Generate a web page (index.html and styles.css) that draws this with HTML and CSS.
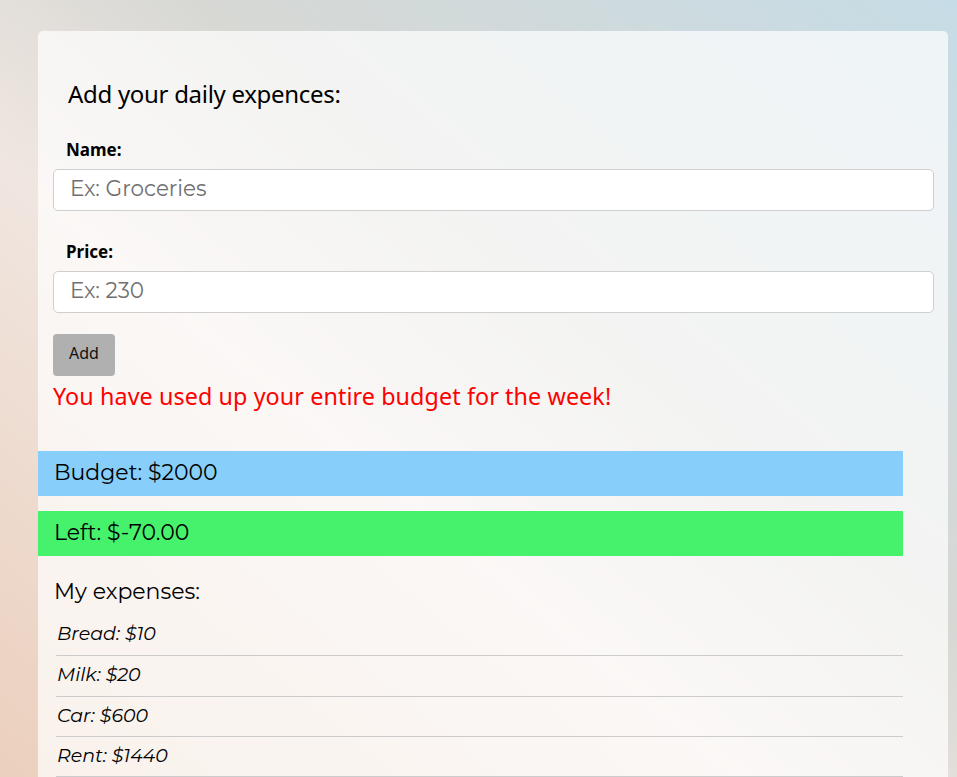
FILE: index.html
```html
<!DOCTYPE html>
<html lang="en">
<head>
<meta charset="utf-8">
<title>Budget</title>
<link rel="stylesheet" href="styles.css">
</head>
<body>
<main class="card">
  <h2 class="title">Add your daily expences:</h2>
  <form class="form">
    <label class="label" for="name">Name:</label>
    <input class="input" id="name" type="text" placeholder="Ex: Groceries">
    <label class="label label-price" for="price">Price:</label>
    <input class="input" id="price" type="text" placeholder="Ex: 230">
    <button class="btn" type="button">Add</button>
  </form>
  <p class="warning">You have used up your entire budget for the week!</p>
  <div class="summary">
    <div class="bar bar-budget">Budget: $2000</div>
    <div class="bar bar-left">Left: $-70.00</div>
    <h3 class="list-title">My expenses:</h3>
    <ul class="list">
      <li class="item">Bread: $10</li>
      <li class="item">Milk: $20</li>
      <li class="item">Car: $600</li>
      <li class="item">Rent: $1440</li>
    </ul>
  </div>
</main>
</body>
</html>
```
FILE: styles.css
```css
html, body {
  margin: 0;
  padding: 0;
}
body {
  min-height: 777px;
  font-family: "Noto Sans", sans-serif;
  color: #000;
  background: linear-gradient(to top right, #ebcfbc 0%, #f0e6e0 40%, #d7d8d4 60%, #c6dce6 100%);
  padding-top: 31px;
  box-sizing: border-box;
}
.card {
  margin-left: 38px;
  width: 910px;
  background: rgba(255, 255, 255, 0.7);
  border-radius: 5px;
  padding: 48px 14px 0 15px;
  box-sizing: border-box;
  min-height: 760px;
}
.title {
  margin: 0 0 0 15px;
  font-family: "Noto Sans", sans-serif;
  font-weight: 400;
  font-size: 24px;
  line-height: 30px;
  letter-spacing: -0.3px;
}
.form {
  display: flex;
  flex-direction: column;
  align-items: flex-start;
  margin-top: 31px;
}
.label {
  margin-left: 13px;
  font-family: "Noto Sans", sans-serif;
  font-weight: 700;
  font-size: 17px;
  line-height: 20px;
  margin-bottom: 9px;
}
.label-price {
  margin-top: 31px;
}
.input {
  width: 100%;
  height: 42px;
  box-sizing: border-box;
  border: 1px solid #cfcfcf;
  border-radius: 5px;
  background: #fff;
  padding: 0 16px 4px 16px;
  font-family: "Montserrat", "Lato", sans-serif;
  font-size: 21.5px;
  color: #333;
}
.input::placeholder {
  color: #707070;
}
.btn {
  margin-top: 21px;
  width: 62px;
  height: 42px;
  border: none;
  border-radius: 4px;
  background: #b0b0b0;
  font-family: "Noto Sans", sans-serif;
  font-size: 16px;
  color: #111;
  padding: 0 0 5px 0;
}
.warning {
  margin: 5px 0 0 0;
  color: #ff0000;
  font-family: "Noto Sans", sans-serif;
  font-size: 23.3px;
  line-height: 30px;
  letter-spacing: 0.1px;
}
.summary {
  margin: 40px 0 0 -15px;
  width: 865px;
}
.bar {
  height: 45px;
  display: flex;
  align-items: center;
  padding-left: 16px;
  padding-bottom: 3px;
  box-sizing: border-box;
  font-family: "Montserrat", "Lato", sans-serif;
  font-size: 22px;
}
.bar-budget {
  background: #87cefa;
}
.bar-left {
  margin-top: 15px;
  background: #46f26c;
}
.list-title {
  margin: 21px 0 0 16px;
  font-family: "Montserrat", "Lato", sans-serif;
  font-weight: 400;
  font-size: 22px;
  line-height: 30px;
}
.list {
  list-style: none;
  margin: 8px 0 0 18px;
  padding: 0;
}
.item {
  height: 40px;
  box-sizing: border-box;
  border-bottom: 1px solid #cccccc;
  padding: 4px 0 6px 1px;
  line-height: 30px;
  font-family: "Montserrat", "Lato", sans-serif;
  font-style: italic;
  font-size: 19px;
}
.item:nth-child(-n+2) {
  height: 41px;
}
```
